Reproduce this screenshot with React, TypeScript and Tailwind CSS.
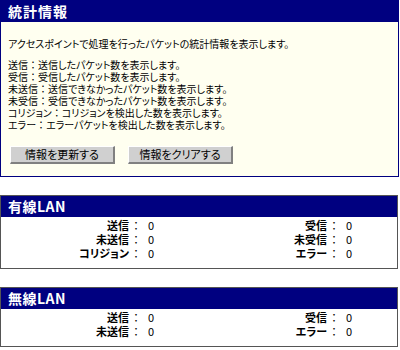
const jp = "font-['MS_UI_Gothic','Noto_Sans_CJK_JP',sans-serif] [font-feature-settings:'palt']";

const descLines: [string, string][] = [
  ['送信', '送信したパケット数を表示します。'],
  ['受信', '受信したパケット数を表示します。'],
  ['未送信', '送信できなかったパケット数を表示します。'],
  ['未受信', '受信できなかったパケット数を表示します。'],
  ['コリジョン', 'コリジョンを検出した数を表示します。'],
  ['エラー', 'エラーパケットを検出した数を表示します。'],
];

function Btn({ label }: { label: string }) {
  return (
    <button className="w-[105px] h-[18px] bg-[#d0d0d0] border-t border-l border-t-white border-l-white border-r-2 border-b-2 border-r-[#808080] border-b-[#808080] text-[11px] leading-none text-black">
      {label}
    </button>
  );
}

function Stat({ label, value }: { label: string; value: string }) {
  return (
    <div className="flex items-center h-[14px]">
      <span className="w-[128px] text-right font-bold">{label}</span>
      <span className="w-[14px] text-center">：</span>
      <span className="pl-[5px]">{value}</span>
    </div>
  );
}

function LanPanel({ title, left, right }: { title: string; left: [string, string][]; right: [string, string][] }) {
  return (
    <div className="w-[398px] border border-[#555] bg-white">
      <div className="h-[21px] bg-[#000080] text-white font-bold text-[14px] leading-[21px] px-[7px] tracking-[0.5px]">{title}</div>
      <div className="grid grid-cols-2 pt-[1px] pb-[8px]">
        <div>
          {left.map(([l, v]) => (
            <Stat key={l} label={l} value={v} />
          ))}
        </div>
        <div>
          {right.map(([l, v]) => (
            <Stat key={l} label={l} value={v} />
          ))}
        </div>
      </div>
    </div>
  );
}

export default function App() {
  return (
    <div className={`w-[400px] h-[350px] bg-white text-black text-[11px] ${jp}`}>
      <div className="w-[399px] border border-[#000080] bg-[#fffff0]">
        <div className="h-[21px] bg-[#000080] text-white font-bold text-[14px] leading-[21px] px-[7px] tracking-[1px]">統計情報</div>
        <div className="px-[7px] pt-[16px] pb-[12px] text-[10px]">
          <p className="leading-[12px]">アクセスポイントで処理を行ったパケットの統計情報を表示します。</p>
          <div className="mt-[9px] leading-[12px]">
            {descLines.map(([k, t]) => (
              <p key={k}>
                {k}
                <span className="[font-feature-settings:normal]">：</span>
                {t}
              </p>
            ))}
          </div>
          <div className="flex gap-[13px] mt-[15px] pl-[2px]">
            <Btn label="情報を更新する" />
            <Btn label="情報をクリアする" />
          </div>
        </div>
      </div>
      <div className="mt-[18px]">
        <LanPanel
          title="有線LAN"
          left={[
            ['送信', '0'],
            ['未送信', '0'],
            ['コリジョン', '0'],
          ]}
          right={[
            ['受信', '0'],
            ['未受信', '0'],
            ['エラー', '0'],
          ]}
        />
      </div>
      <div className="mt-[18px]">
        <LanPanel
          title="無線LAN"
          left={[
            ['送信', '0'],
            ['未送信', '0'],
          ]}
          right={[
            ['受信', '0'],
            ['エラー', '0'],
          ]}
        />
      </div>
    </div>
  );
}
